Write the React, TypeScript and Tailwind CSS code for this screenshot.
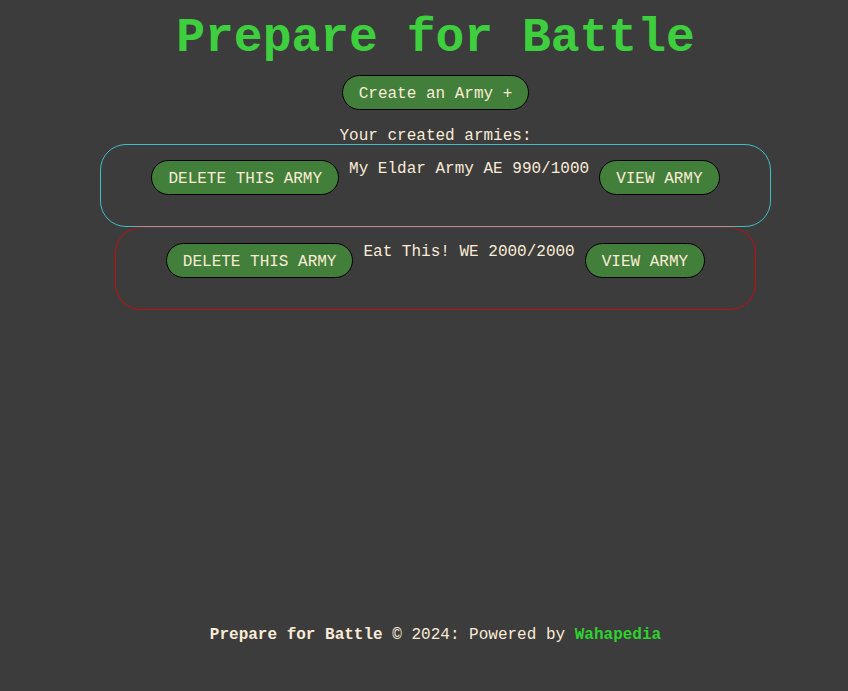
const armies = [
  { id: "1", name: "My Eldar Army", faction: "AE", points: "990/1000", border: "border-[#3cbfc8]" },
  { id: "2", name: "Eat This!", faction: "WE", points: "2000/2000", border: "border-[#cc0a0a]" },
];

const btn =
  "rounded-full border border-black bg-[#427f3a] px-4 pt-[2px] h-[35px] text-[16px] leading-none text-[#faebd7]";

export default function App() {
  return (
    <div className="min-h-screen flex flex-col pl-[23px] bg-[#3c3c3c] text-[#faebd7] font-['Liberation_Mono',monospace]">
      <main className="flex-1 flex flex-col items-center">
        <h1 className="mt-[11px] text-[48px] leading-[54px] font-bold text-[#3ecf3e]">
          Prepare for Battle
        </h1>
        <button className={`mt-[10px] ${btn}`}>Create an Army +</button>
        <p className="mt-[18px] text-[16px] leading-[16px]">Your created armies:</p>
        <div className="flex flex-col items-center">
          {armies.map((army) => (
            <div
              key={army.id}
              className={`flex items-start gap-[10px] rounded-[26px] border ${army.border} px-[50px] pt-[15px] pb-[31px]`}
            >
              <button className={`${btn} uppercase`}>Delete this army</button>
              <span className="text-[16px] leading-[18px]">
                {army.name} {army.faction} {army.points}
              </span>
              <button className={`${btn} uppercase`}>View army</button>
            </div>
          ))}
        </div>
      </main>
      <footer className="pb-[47px] text-center text-[16px] leading-[18px]">
        <span className="font-bold">Prepare for Battle</span> © 2024: Powered by{" "}
        <a className="font-bold text-[#2ed12e]">Wahapedia</a>
      </footer>
    </div>
  );
}
